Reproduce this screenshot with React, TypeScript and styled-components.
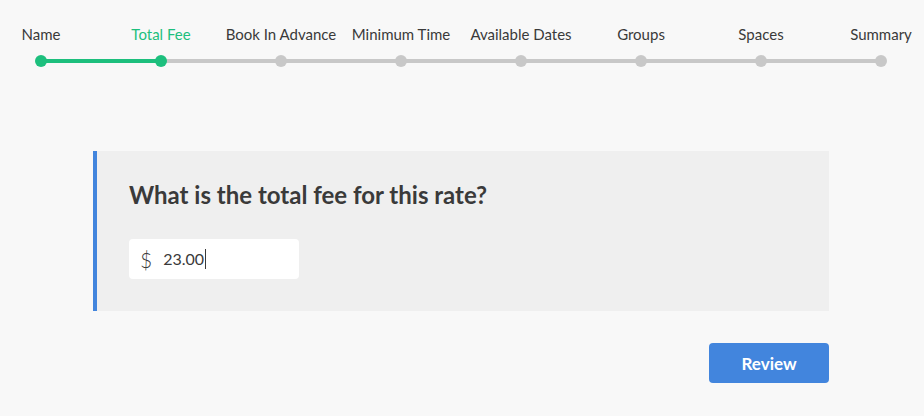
import React from "react";
import styled, { createGlobalStyle } from "styled-components";

const colors = {
  PAGE: "#f8f8f8",
  CARD: "#efefef",
  TEXT: "#3a3a3a",
  GREEN: "#1dbf7d",
  GREY: "#c8c8c8",
  BLUE: "#4285dd",
};

const GlobalStyle = createGlobalStyle`
  html, body {
    margin: 0;
    padding: 0;
    background: ${colors.PAGE};
    font-family: Lato, "Open Sans", sans-serif;
    color: ${colors.TEXT};
  }
`;

const Page = styled.div`
  width: 924px;
  height: 416px;
  overflow: hidden;
`;

const Stepper = styled.div`
  display: flex;
  justify-content: space-between;
  margin: 26px 43px 0 41px;
  height: 41px;
`;

const Track = styled.div<{ $done: boolean }>`
  flex: 1;
  height: 4px;
  margin-top: 33px;
  background: ${(p) => (p.$done ? colors.GREEN : colors.GREY)};
`;

const Step = styled.div`
  width: 0;
  display: flex;
  flex-direction: column;
  align-items: center;
`;

const StepLabel = styled.div<{ $active: boolean }>`
  white-space: nowrap;
  font-size: 15px;
  line-height: 17px;
  color: ${(p) => (p.$active ? colors.GREEN : colors.TEXT)};
`;

const Dot = styled.div<{ $done: boolean }>`
  position: relative;
  z-index: 1;
  flex: none;
  width: 12px;
  height: 12px;
  margin-top: 12px;
  border-radius: 50%;
  background: ${(p) => (p.$done ? colors.GREEN : colors.GREY)};
`;

const Card = styled.section`
  margin: 84px 0 0 93px;
  width: 736px;
  height: 160px;
  box-sizing: border-box;
  border-left: 4px solid ${colors.BLUE};
  background: ${colors.CARD};
  padding: 28px 0 0 32px;
`;

const Question = styled.h2`
  margin: 0;
  font-size: 24px;
  line-height: 32px;
  font-weight: 700;
  color: ${colors.TEXT};
`;

const MoneyField = styled.div`
  margin-top: 28px;
  width: 170px;
  height: 40px;
  box-sizing: border-box;
  background: #fff;
  border-radius: 4px;
  display: flex;
  align-items: center;
  padding-left: 11px;
  font-size: 16px;
`;

const Currency = styled.span`
  font-size: 21px;
  margin-right: 11px;
  font-weight: 300;
`;

const Value = styled.span`
  border-right: 1px solid ${colors.TEXT};
  padding-right: 1px;
  line-height: 20px;
`;

const Actions = styled.div`
  display: flex;
  justify-content: flex-end;
  width: 829px;
  margin-top: 32px;
`;

const ReviewButton = styled.button`
  width: 120px;
  height: 40px;
  border: none;
  border-radius: 4px;
  background: ${colors.BLUE};
  color: #fff;
  font-family: inherit;
  font-size: 17px;
  font-weight: 700;
`;

const steps = [
  "Name",
  "Total Fee",
  "Book In Advance",
  "Minimum Time",
  "Available Dates",
  "Groups",
  "Spaces",
  "Summary",
];
const current = 1;

export default function App() {
  return (
    <Page>
      <GlobalStyle />
      <Stepper>
        {steps.map((s, i) => (
          <React.Fragment key={s}>
            {i > 0 && <Track $done={i <= current} />}
            <Step>
              <StepLabel $active={i === current}>{s}</StepLabel>
              <Dot $done={i <= current} />
            </Step>
          </React.Fragment>
        ))}
      </Stepper>
      <Card>
        <Question>What is the total fee for this rate?</Question>
        <MoneyField>
          <Currency>$</Currency>
          <Value>23.00</Value>
        </MoneyField>
      </Card>
      <Actions>
        <ReviewButton>Review</ReviewButton>
      </Actions>
    </Page>
  );
}
